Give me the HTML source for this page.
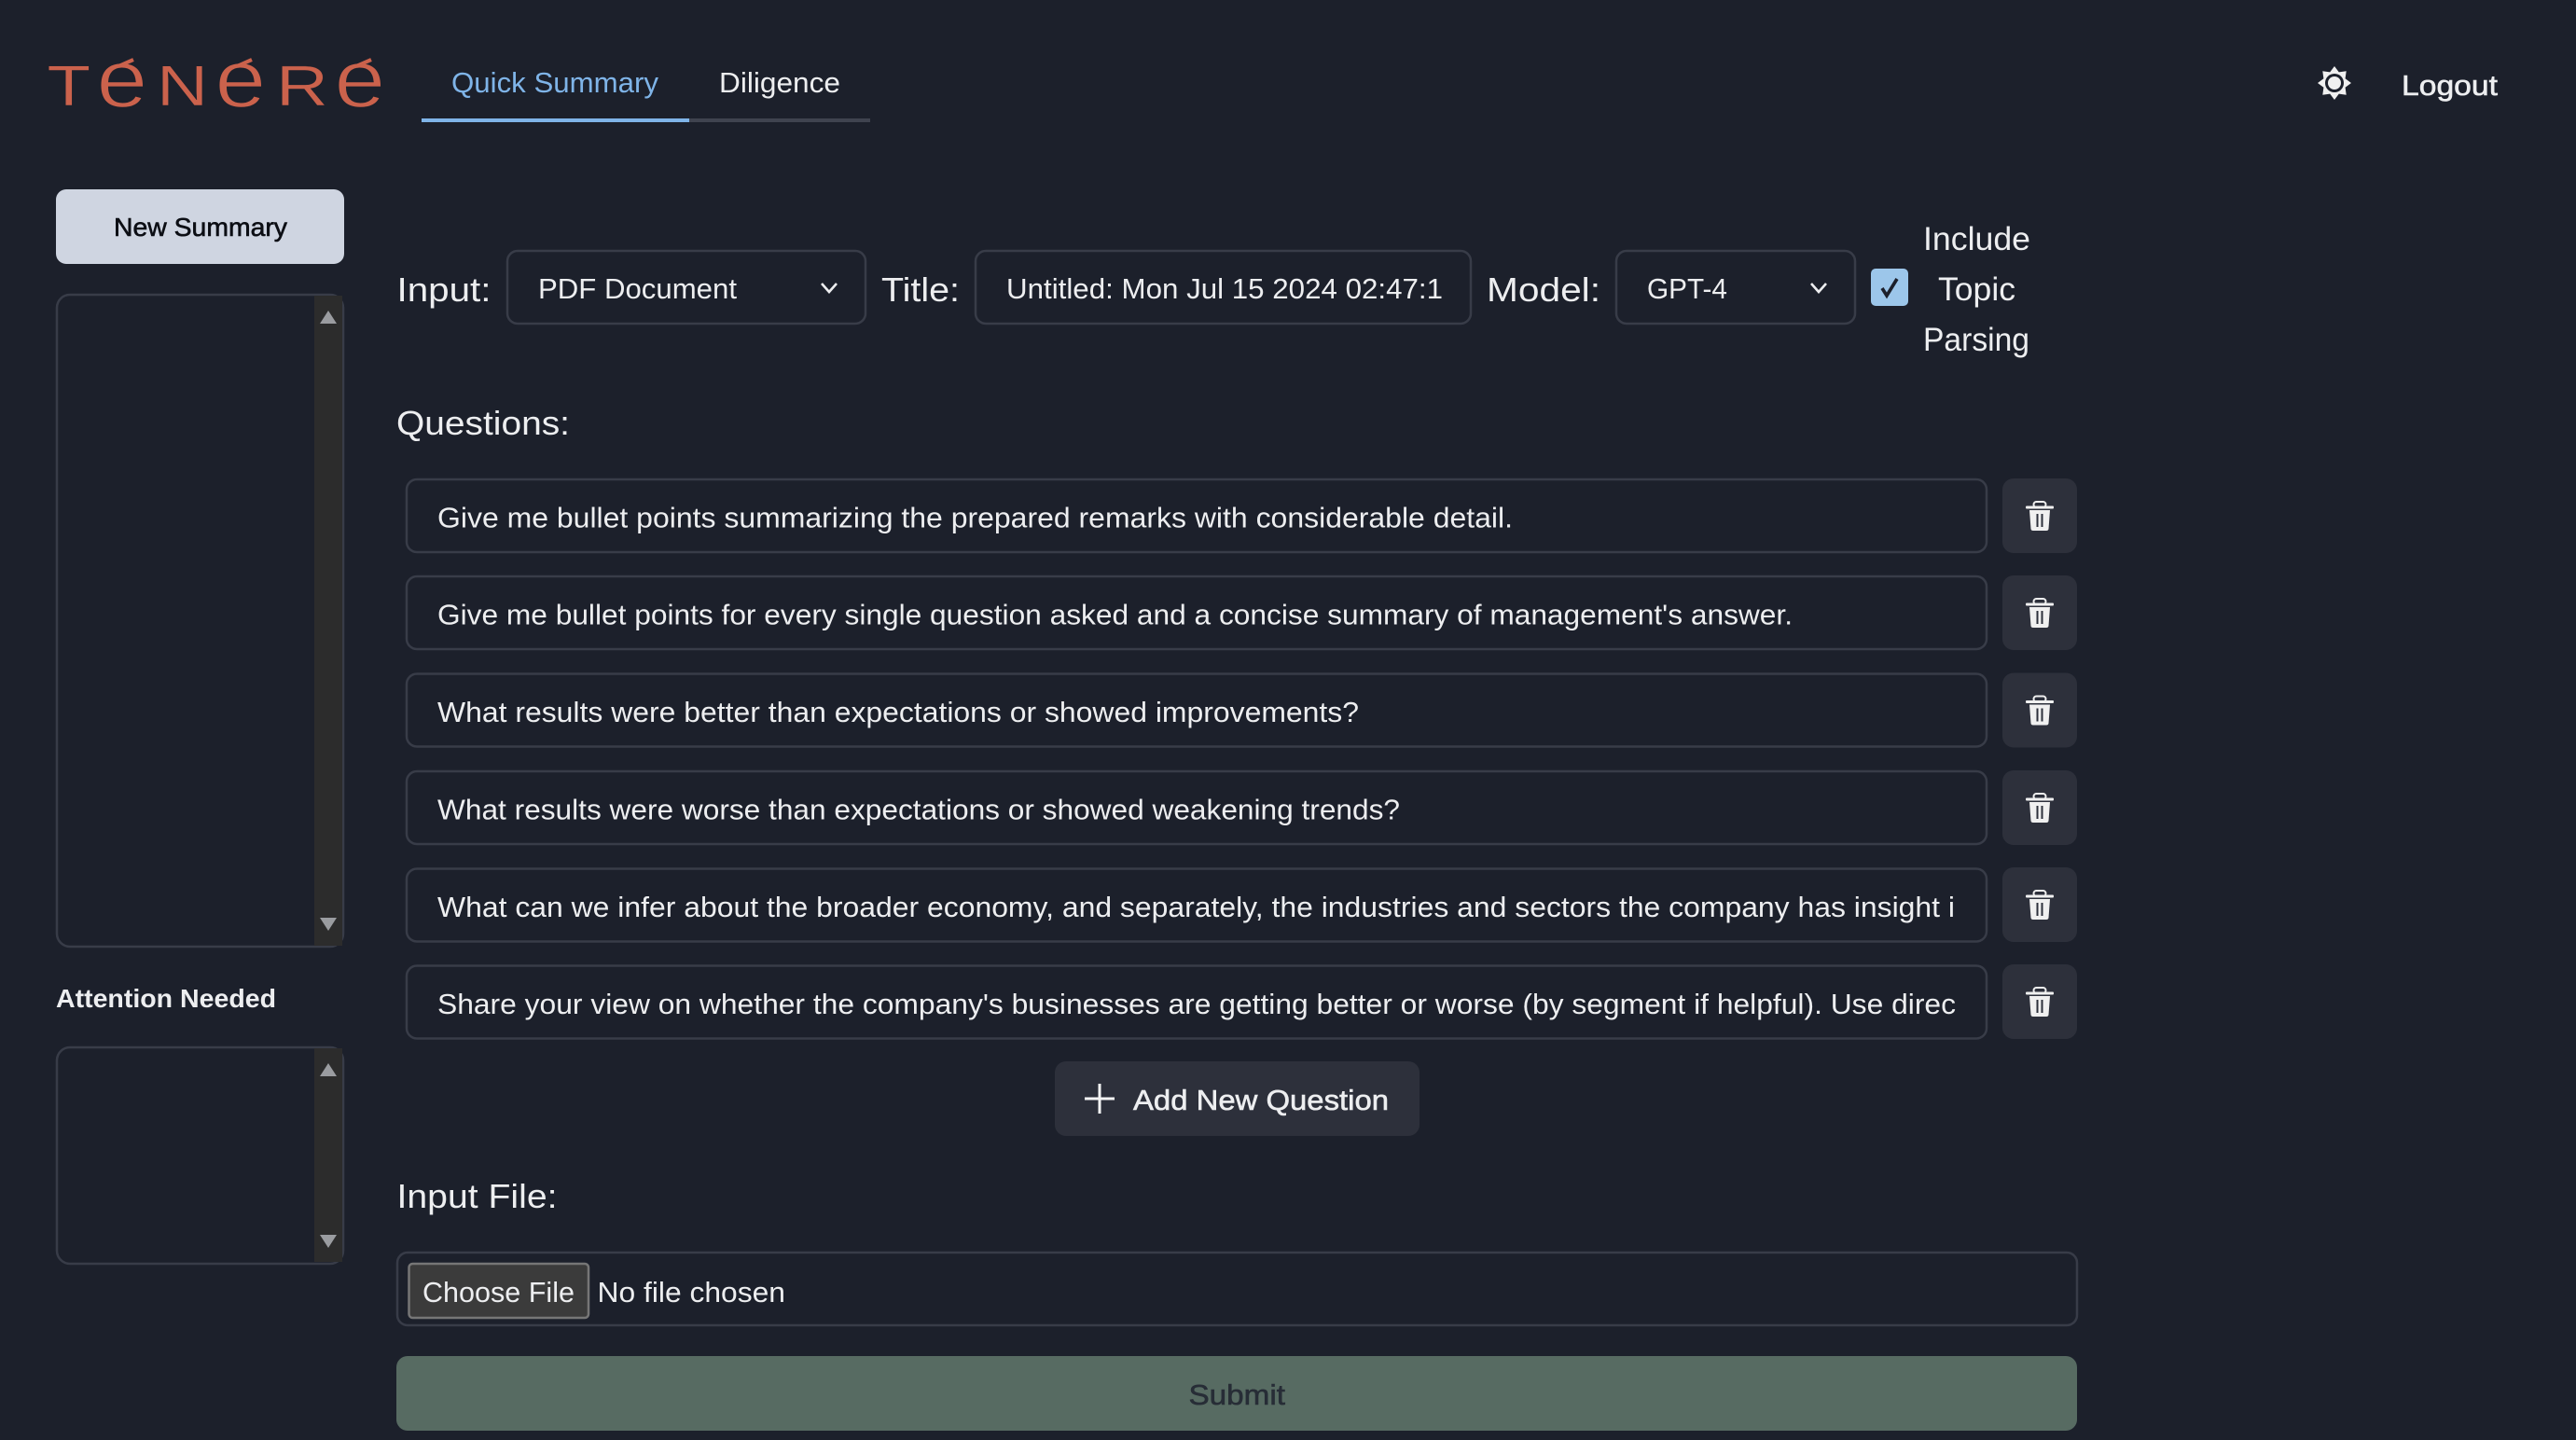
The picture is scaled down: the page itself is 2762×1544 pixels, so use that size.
<!DOCTYPE html>
<html lang="en"><head><meta charset="utf-8"><title>Ténéré</title>
<style>
html,body{margin:0;padding:0;background:#1c202b;width:2762px;height:1544px;overflow:hidden}
svg{display:block}
text{font-family:"Liberation Sans",sans-serif;fill:#edeef0;font-size:31px}
.l{font-size:36px}
.m{stroke:currentColor;stroke-width:.6px}
.b{fill:none;stroke:#383c48;stroke-width:2.5}
</style></head><body>
<svg xmlns="http://www.w3.org/2000/svg" width="2762" height="1544" viewBox="0 0 2762 1544">
<rect width="2762" height="1544" fill="#1c202b"/>
<defs><clipPath id="lc"><rect x="40" y="68" width="400" height="60"/></clipPath></defs>

<!-- logo -->
<g>
<text transform="translate(50.5,113) scale(1.24,1)" style="font-size:61.5px;fill:#cb624c;stroke:#1c202b;stroke-width:.4px">T</text>
<text transform="translate(168,113) scale(1.24,1)" style="font-size:61.5px;fill:#cb624c;stroke:#1c202b;stroke-width:.4px">N</text>
<text transform="translate(296,113) scale(1.26,1)" style="font-size:61.5px;fill:#cb624c;stroke:#1c202b;stroke-width:.4px">R</text>
<g clip-path="url(#lc)">
<text transform="translate(103.5,114.5) scale(1.13,1)" style="font-size:87px;fill:#cb624c;stroke:#1c202b;stroke-width:1.4px">é</text>
<text transform="translate(230.5,114.5) scale(1.13,1)" style="font-size:87px;fill:#cb624c;stroke:#1c202b;stroke-width:1.4px">é</text>
<text transform="translate(358.5,114.5) scale(1.13,1)" style="font-size:87px;fill:#cb624c;stroke:#1c202b;stroke-width:1.4px">é</text>
</g>
<path d="M127 71L143 64M254 71L270 64M382 71L398 64" fill="none" stroke="#cb624c" stroke-width="4"/>
</g>

<!-- tabs -->
<text x="484" y="99" textLength="222" lengthAdjust="spacingAndGlyphs" style="fill:#7fb4e8">Quick Summary</text>
<text x="771" y="99" textLength="130" lengthAdjust="spacingAndGlyphs">Diligence</text>
<rect x="739" y="127" width="194" height="4" fill="#3f434f"/>
<rect x="452" y="127" width="287" height="4" fill="#7fb4e8"/>

<!-- header right -->
<g fill="#f0f0f0">
<polygon points="2503,71 2507.8,77.4 2515.7,76.3 2514.6,84.2 2521,89 2514.6,93.8 2515.7,101.7 2507.8,100.6 2503,107 2498.2,100.6 2490.3,101.7 2491.4,93.8 2485,89 2491.4,84.2 2490.3,76.3 2498.2,77.4"/>
<circle cx="2503" cy="89" r="10" fill="#1c202b"/>
<circle cx="2503" cy="89" r="7"/>
</g>
<text x="2575" y="102" textLength="103" lengthAdjust="spacingAndGlyphs" class="m" color="#edeef0">Logout</text>

<!-- sidebar -->
<rect x="60" y="203" width="309" height="80" rx="11" fill="#cfd5e1"/>
<text x="122" y="253" textLength="186" lengthAdjust="spacingAndGlyphs" class="m" color="#0c0e14" style="fill:#0c0e14;font-size:28px">New Summary</text>

<rect class="b" x="61" y="316" width="307" height="699" rx="14"/>
<rect x="337" y="317" width="30" height="697" fill="#2c2c2c"/>
<polygon points="352,333 361,347 343,347" fill="#9a9ca0"/>
<polygon points="343,984 361,984 352,998" fill="#9a9ca0"/>

<text x="60" y="1080" textLength="236" lengthAdjust="spacingAndGlyphs" style="font-size:28px;font-weight:700">Attention Needed</text>

<rect class="b" x="61" y="1123" width="307" height="232" rx="14"/>
<rect x="337" y="1124" width="30" height="229" fill="#2c2c2c"/>
<polygon points="352,1140 361,1154 343,1154" fill="#9a9ca0"/>
<polygon points="343,1324 361,1324 352,1338" fill="#9a9ca0"/>

<!-- top row -->
<text class="l" x="425.5" y="323" textLength="101" lengthAdjust="spacingAndGlyphs">Input:</text>
<rect class="b" x="544" y="269" width="384" height="78" rx="11"/>
<text x="577" y="320" textLength="213" lengthAdjust="spacingAndGlyphs">PDF Document</text>
<path d="M881 304L889 313L897 304" fill="none" stroke="#edeef0" stroke-width="2.6"/>

<text class="l" x="945" y="323" textLength="84" lengthAdjust="spacingAndGlyphs">Title:</text>
<rect class="b" x="1046" y="269" width="531" height="78" rx="11"/>
<text x="1079" y="320" textLength="468" lengthAdjust="spacingAndGlyphs">Untitled: Mon Jul 15 2024 02:47:1</text>

<text class="l" x="1594" y="323" textLength="122" lengthAdjust="spacingAndGlyphs">Model:</text>
<rect class="b" x="1733" y="269" width="256" height="78" rx="11"/>
<text x="1766" y="320" textLength="86" lengthAdjust="spacingAndGlyphs">GPT-4</text>
<path d="M1942 304L1950 313L1958 304" fill="none" stroke="#edeef0" stroke-width="2.6"/>

<rect x="2006" y="288" width="40" height="40" rx="5" fill="#9cc6ea"/>
<path d="M2018 309L2023 317L2034 299" fill="none" stroke="#1c202b" stroke-width="3.6"/>
<text x="2062" y="268" textLength="115" lengthAdjust="spacingAndGlyphs" style="font-size:35px">Include</text>
<text x="2078" y="322" textLength="83" lengthAdjust="spacingAndGlyphs" style="font-size:35px">Topic</text>
<text x="2062" y="376" textLength="114" lengthAdjust="spacingAndGlyphs" style="font-size:35px">Parsing</text>

<text class="l" x="425" y="466" textLength="186" lengthAdjust="spacingAndGlyphs">Questions:</text>

<!-- question rows -->
<defs>
<g id="tr">
<rect x="2147" y="0" width="80" height="80" rx="12" fill="#2d303b"/>
<g transform="translate(0,24)">
<rect x="2172" y="5.5" width="30" height="3" rx="1" fill="#f0f0f0"/>
<rect x="2180.5" y="1" width="13" height="6" rx="3" fill="none" stroke="#f0f0f0" stroke-width="2"/>
<path d="M2176 10H2198L2196.5 30Q2196.3 32 2194 32H2180Q2177.7 32 2177.5 30Z" fill="#f0f0f0"/>
<rect x="2183.5" y="14" width="2" height="14" fill="#2d303b"/>
<rect x="2188.5" y="14" width="2" height="14" fill="#2d303b"/>
</g>
</g>
<clipPath id="qc"><rect x="460" y="0" width="1637" height="1544"/></clipPath>
</defs>
<rect class="b" x="436" y="514" width="1694" height="78" rx="11"/><use href="#tr" y="513"/>
<text x="469" y="565.5" textLength="1153" lengthAdjust="spacingAndGlyphs">Give me bullet points summarizing the prepared remarks with considerable detail.</text>
<rect class="b" x="436" y="618" width="1694" height="78" rx="11"/><use href="#tr" y="617"/>
<text x="469" y="669.5" textLength="1453" lengthAdjust="spacingAndGlyphs">Give me bullet points for every single question asked and a concise summary of management's answer.</text>
<rect class="b" x="436" y="722.5" width="1694" height="78" rx="11"/><use href="#tr" y="721.5"/>
<text x="469" y="774" textLength="988" lengthAdjust="spacingAndGlyphs">What results were better than expectations or showed improvements?</text>
<rect class="b" x="436" y="827" width="1694" height="78" rx="11"/><use href="#tr" y="826"/>
<text x="469" y="878.5" textLength="1032" lengthAdjust="spacingAndGlyphs">What results were worse than expectations or showed weakening trends?</text>
<rect class="b" x="436" y="931.5" width="1694" height="78" rx="11"/><use href="#tr" y="930"/>
<text x="469" y="983" textLength="1627" lengthAdjust="spacingAndGlyphs" clip-path="url(#qc)">What can we infer about the broader economy, and separately, the industries and sectors the company has insight i</text>
<rect class="b" x="436" y="1035.5" width="1694" height="78" rx="11"/><use href="#tr" y="1034"/>
<text x="469" y="1087" textLength="1628" lengthAdjust="spacingAndGlyphs" clip-path="url(#qc)">Share your view on whether the company's businesses are getting better or worse (by segment if helpful). Use direc</text>

<!-- add -->
<rect x="1131" y="1138" width="391" height="80" rx="12" fill="#2d303b"/>
<path d="M1163 1178H1195M1179 1162V1194" stroke="#f4f4f4" stroke-width="3" fill="none"/>
<text x="1215" y="1190" textLength="274" lengthAdjust="spacingAndGlyphs" class="m" color="#edeef0">Add New Question</text>

<!-- file -->
<text class="l" x="425.5" y="1295" textLength="172" lengthAdjust="spacingAndGlyphs">Input File:</text>
<rect class="b" x="426" y="1343" width="1801" height="78" rx="11"/>
<rect x="438.5" y="1355" width="192.5" height="58" rx="4" fill="#3b3b3b" stroke="#767676" stroke-width="2.5"/>
<text x="453" y="1396" textLength="163" lengthAdjust="spacingAndGlyphs">Choose File</text>
<text x="640.5" y="1396" textLength="201.5" lengthAdjust="spacingAndGlyphs">No file chosen</text>

<!-- submit -->
<rect x="425" y="1454" width="1802" height="80" rx="12" fill="#576b62"/>
<text x="1274.5" y="1506" textLength="103.5" lengthAdjust="spacingAndGlyphs" class="m" color="#272d36" style="fill:#272d36">Submit</text>
</svg>
</body></html>
